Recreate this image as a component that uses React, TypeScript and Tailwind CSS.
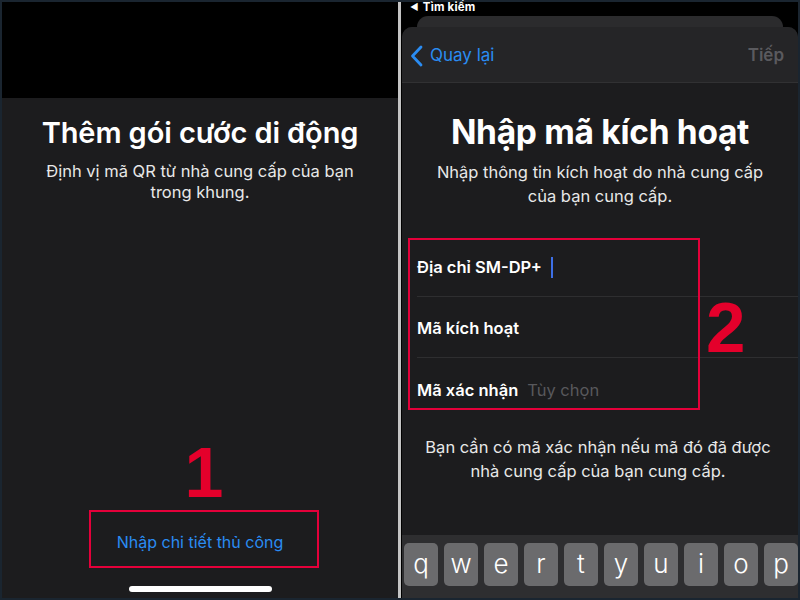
import React from "react";

const keys = ["q", "w", "e", "r", "t", "y", "u", "i", "o", "p"];

export default function App() {
  return (
    <div
      className="w-[800px] h-[600px] flex bg-[#1a2530] p-[2px] overflow-hidden"
      style={{ fontFamily: "Inter, 'Noto Sans', sans-serif" }}
    >
      {/* LEFT PANEL */}
      <div className="w-[396px] flex flex-col bg-[#1c1c1e]">
        <div className="h-[96px] bg-black shrink-0" />
        <div className="pt-[17px] text-center text-white text-[29px] leading-[36px] font-semibold tracking-[-0.1px]">
          Thêm gói cước di động
        </div>
        <div className="mt-[10px] text-center text-[#e8e8e8] text-[16.5px] leading-[21px] px-8">
          Định vị mã QR từ nhà cung cấp của bạn
          <br />
          trong khung.
        </div>
        <div className="flex-1" />
        <div className="ml-[87px] w-[230px] flex flex-col">
          <div
            className="h-[72px] text-center text-[70px] leading-none font-bold text-[#e4002b]"
            style={{ fontFamily: "'Liberation Sans', Arial, sans-serif" }}
          >
            1
          </div>
          <div className="h-[58px] border-2 border-[#e4003a] flex items-center justify-center pt-[6px] pr-[8px] text-[16px] text-[#2a8cf2]">
            Nhập chi tiết thủ công
          </div>
        </div>
        <div className="mt-[18px] mx-auto w-[143px] h-[6px] rounded-full bg-white" />
        <div className="h-[6px]" />
      </div>

      {/* DIVIDER */}
      <div className="w-[3px] bg-[#c4c4c4] shrink-0" />

      {/* RIGHT PANEL */}
      <div className="flex-1 flex flex-col bg-black">
        <div className="h-[14px] pl-[9px] flex items-start text-white text-[11.5px] font-bold leading-[10px] tracking-[0.2px]">
          <span className="text-[9px] mr-[4px]">◀</span>
          <span>Tìm kiếm</span>
        </div>
        <div className="h-[11px] ml-[16px] mr-[15px] rounded-t-[12px] bg-[#2b2b2d]" />
        <div className="flex-1 ml-[1px] flex flex-col rounded-t-[10px] bg-[#1c1c1e] overflow-hidden">
          <div className="h-[56px] shrink-0 bg-[#252527] border-b border-[#313133] flex items-center justify-between pl-[8px] pr-[14px] pt-[3px]">
            <div className="flex items-center text-[#2a8cf2] text-[17px]">
              <svg width="13" height="22" viewBox="0 0 13 22" className="mr-[7px]">
                <path d="M11 2 L2.5 11 L11 20" fill="none" stroke="#2a8cf2" strokeWidth="2.8" strokeLinecap="round" strokeLinejoin="round" />
              </svg>
              <span>Quay lại</span>
            </div>
            <span className="text-[17px] font-semibold text-[#5a5a5e]">Tiếp</span>
          </div>

          <div className="pt-[31px] text-center text-white text-[33.5px] leading-[36px] font-bold tracking-[-0.3px]">
            Nhập mã kích hoạt
          </div>
          <div className="mt-[10px] text-center text-[#e8e8e8] text-[16.5px] leading-[24px]">
            Nhập thông tin kích hoạt do nhà cung cấp
            <br />
            của bạn cung cấp.
          </div>

          <div className="relative mt-[28px] text-white text-[16.5px] font-semibold">
            <div className="h-[61px] ml-[15px] flex items-center border-b border-[#2e2e30] pt-[2px]">
              <span>Địa chỉ SM-DP+</span>
              <span className="ml-[9px] w-[2px] h-[21px] bg-[#3d6fe6]" />
            </div>
            <div className="h-[61px] ml-[15px] flex items-center border-b border-[#2e2e30] pt-[2px]">
              <span>Mã kích hoạt</span>
            </div>
            <div className="h-[61px] ml-[15px] flex items-center pt-[4px]">
              <span>Mã xác nhận</span>
              <span className="ml-[9px] font-normal text-[#58585c]">Tùy chọn</span>
            </div>
            <div className="absolute left-[6px] top-[2px] w-[292px] h-[172px] border-2 border-[#e4003a]" />
            <div
              className="absolute left-[304px] top-[56px] text-[71px] leading-none font-bold text-[#e4002b]"
              style={{ fontFamily: "'Liberation Sans', Arial, sans-serif" }}
            >
              2
            </div>
          </div>

          <div className="mt-[16px] text-center text-[#e8e8e8] text-[16.5px] leading-[24px] pr-[4px]">
            Bạn cần có mã xác nhận nếu mã đó đã được
            <br />
            nhà cung cấp của bạn cung cấp.
          </div>

          <div className="flex-1" />

          <div className="h-[63px] shrink-0 bg-[#2e2e30] pt-[8px] pl-[2px] flex gap-[6px]">
            {keys.map((k) => (
              <div
                key={k}
                className="w-[34px] h-[43px] rounded-[5px] bg-[#6b6b6d] flex items-center justify-center text-white text-[26px] font-light pb-[3px]"
              >
                {k}
              </div>
            ))}
          </div>
        </div>
      </div>
    </div>
  );
}
